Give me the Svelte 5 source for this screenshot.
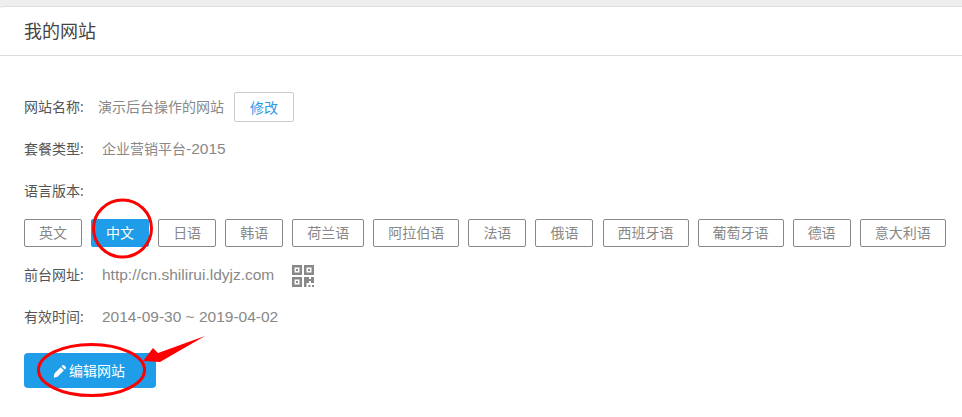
<script>
	const langs = ['英文', '中文', '日语', '韩语', '荷兰语', '阿拉伯语', '法语', '俄语', '西班牙语', '葡萄牙语', '德语', '意大利语'];
	const active = '中文';
</script>

<div class="page">
	<div class="card">
		<h2 class="card-title">我的网站</h2>
		<div class="card-body">
			<div class="row">
				<span class="label">网站名称:</span>
				<span class="value name">演示后台操作的网站</span>
				<button class="edit-name">修改</button>
			</div>
			<div class="row">
				<span class="label">套餐类型:</span>
				<span class="value">企业营销平台<span class="latin">-2015</span></span>
			</div>
			<div class="row">
				<span class="label">语言版本:</span>
			</div>
			<div class="langs">
				{#each langs as lang}
					<button class="lang" class:active={lang === active}>{lang}</button>
				{/each}
			</div>
			<div class="row">
				<span class="label">前台网址:</span>
				<span class="value latin">http://cn.shilirui.ldyjz.com</span>
				<svg class="qr" viewBox="0 0 22 22" width="22" height="22" aria-hidden="true">
					<path fill="#888" fill-rule="evenodd" d="M0 0h10v10H0zM2.500 2.500v5h5v-5zM4 4h2v2H4zM12 0h10v10H12zM14.500 2.500v5h5v-5zM16 4h2v2h-2zM0 12h10v10H0zM2.500 14.500v5h5v-5zM4 16h2v2H4zM12 12h5v2h2v-2h3v6h-3v-2h-2v2h-2.500v4H12zM16.500 20h2v2h-2zM20 20h2v2h-2z" />
				</svg>
			</div>
			<div class="row">
				<span class="label">有效时间:</span>
				<span class="value latin">2014-09-30 ~ 2019-04-02</span>
			</div>
			<button class="edit-site">
				<svg viewBox="0 0 14 14" width="14" height="14" aria-hidden="true">
					<path fill="#fff" d="M9.500 1.300a1.100 1.100 0 0 1 1.600 0l1.600 1.600a1.100 1.100 0 0 1 0 1.600l-1 1-3.200-3.200zM7.600 3.200l3.200 3.200-6.300 6.300-3.800 1 .7-4.200z" />
				</svg>
				<span class="edit-text">编辑网站</span>
			</button>
		</div>
	</div>

	<svg class="marks" viewBox="0 0 962 417" width="962" height="417" aria-hidden="true">
		<ellipse cx="122.500" cy="228.500" rx="29" ry="28.500" fill="none" stroke="#f00" stroke-width="3" />
		<ellipse cx="91.500" cy="370" rx="53" ry="25.500" fill="none" stroke="#f00" stroke-width="3" />
		<path fill="#f00" d="M143 361 L153 348 L158 353 L205 336 L160 362 Z" />
	</svg>
</div>

<style>
	:global(body) {
		margin: 0;
		background: #eee;
	}
	.page {
		position: relative;
		width: 962px;
		height: 417px;
		overflow: hidden;
		padding-top: 6px;
		box-sizing: border-box;
		font-family: "Open Sans", "Noto Sans CJK SC", sans-serif;
		font-size: 14px;
		color: #555;
	}
	.card {
		background: #fff;
		border-top: 1px solid #ddd;
		border-radius: 3px 0 0 0;
		height: 100%;
	}
	.card-title {
		margin: 0;
		height: 48px;
		line-height: 48px;
		padding-left: 24px;
		font-size: 18px;
		font-weight: 400;
		color: #444;
		border-bottom: 1px solid #ddd;
	}
	.card-body {
		padding: 30px 0 0 24px;
	}
	.row {
		display: flex;
		align-items: center;
		height: 42px;
	}
	.label {
		width: 78px;
		flex: none;
		padding-bottom: 2px;
	}
	.value {
		color: #888;
		padding-bottom: 2px;
	}
	.latin {
		font-family: "Liberation Sans", "Noto Sans CJK SC", sans-serif;
		font-size: 15.5px;
	}
	.value.latin {
		padding-bottom: 0;
	}
	.name {
		margin-left: -4px;
		margin-right: 10px;
	}
	.edit-name {
		width: 60px;
		height: 30px;
		padding: 0;
		background: #fff;
		border: 1px solid #ccc;
		border-radius: 2px;
		color: #2a9ae8;
		font: inherit;
	}
	.langs {
		display: flex;
		gap: 9.07px;
		height: 42px;
		padding-top: 7px;
		box-sizing: border-box;
	}
	.lang {
		height: 28px;
		padding: 0 14px;
		background: #fff;
		border: 1px solid #888;
		border-radius: 2px;
		color: #888;
		font: inherit;
		line-height: 26px;
	}
	.lang.active {
		background: #1f9de8;
		border-color: #1f9de8;
		color: #fff;
	}
	.qr {
		margin: 2px 0 0 18px;
	}
	.edit-site {
		display: flex;
		align-items: center;
		justify-content: center;
		gap: 2px;
		width: 132px;
		height: 35px;
		margin-top: 15px;
		padding: 0 2px 0 0;
		background: #1f9de8;
		border: none;
		border-radius: 4px;
		color: #fff;
		font: inherit;
	}
	.edit-text {
		padding-bottom: 2px;
	}
	.marks {
		position: absolute;
		left: 0;
		top: 0;
		pointer-events: none;
	}
</style>
